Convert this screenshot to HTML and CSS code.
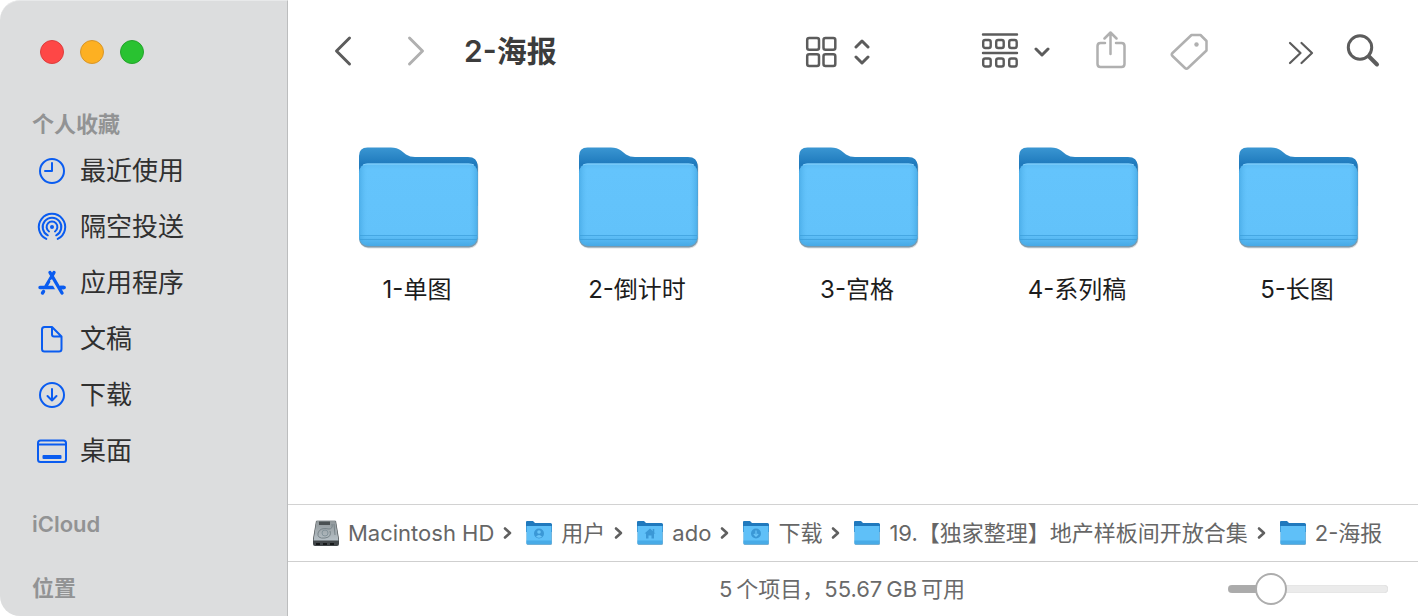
FILE: index.html
```
<!DOCTYPE html>
<html lang="zh-CN">

<head>
  <meta charset="UTF-8" />
  <meta name="viewport" content="width=device-width, initial-scale=1" />
  <title>2-海报</title>
  <link rel="stylesheet" href="styles.css">
</head>
<body>

  <!-- shared icons -->
  <svg class="defs" width="0" height="0" aria-hidden="true">
    <defs>
      <linearGradient id="folder-back" x1="0" y1="0" x2="0" y2="1">
        <stop offset="0" stop-color="#3a96d2" />
        <stop offset="0.28" stop-color="#1f7abd" />
      </linearGradient>
      <linearGradient id="folder-front" x1="0" y1="0" x2="0" y2="1">
        <stop offset="0" stop-color="#5dbcf3" />
        <stop offset="0.08" stop-color="#64c4fc" />
        <stop offset="0.86" stop-color="#62c2fa" />
        <stop offset="1" stop-color="#46a9e6" />
      </linearGradient>
      <linearGradient id="folder-sides">
        <stop offset="0" stop-color="#3b9fdc" stop-opacity="0.6" />
        <stop offset="0.07" stop-color="#58b8f0" stop-opacity="0" />
        <stop offset="0.93" stop-color="#58b8f0" stop-opacity="0" />
        <stop offset="1" stop-color="#3b9fdc" stop-opacity="0.6" />
      </linearGradient>
      <linearGradient id="disk-top" x1="0" y1="0" x2="0" y2="1">
        <stop offset="0" stop-color="#8f9699" />
        <stop offset="1" stop-color="#b6c0c6" />
      </linearGradient>
    </defs>
    <symbol id="folder" viewBox="0 0 122 104">
      <rect x="1.5" y="12" width="119" height="90.5" rx="9" fill="#000" opacity="0.12" />
      <rect x="1" y="12" width="119" height="89.5" rx="9" fill="#4f7c99" opacity="0.7" />
      <path d="M1 30V10Q1 1.500 9.500 1.500H33Q39 1.500 43 4.500L48 8.500Q52 11 57 11H110Q119.500 11 119.500 20V60H1Z" fill="url(#folder-back)" />
      <rect x="1" y="17.500" width="118.500" height="82.500" rx="9" fill="url(#folder-front)" />
      <rect x="1" y="17.500" width="118.500" height="82.500" rx="9" fill="url(#folder-sides)" />
      <path d="M5 19Q7 18 9 18H111Q114 18 116 19" fill="none" stroke="#8ad3fd" />
      <path d="M2 89.500H119M2 93.500H119" stroke="#389bd8" stroke-width="1" opacity="0.65" />
    </symbol>
    <symbol id="folder-small" viewBox="0 0 26 26">
      <rect x="0.500" y="4" width="25.500" height="21" rx="1.500" fill="#5588a8" opacity="0.7" />
      <path d="M0 2Q0 1 1 1H7L9 3H24.500Q26 3 26 4.500V12H0Z" fill="#2079bd" />
      <path d="M0.500 6H25.500V23Q25.500 24.200 24.300 24.200H1.700Q0.500 24.200 0.500 23Z" fill="#5fc0f8" />
      <path d="M0.500 20.500H25.500V23Q25.500 24.200 24.300 24.200H1.700Q0.500 24.200 0.500 23Z" fill="#48abe7" />
    </symbol>
    <symbol id="separator" viewBox="0 0 9 14">
      <path d="M2 2.500L7 7L2 11.500" fill="none" stroke="#606060" stroke-width="2.600" stroke-linecap="round" stroke-linejoin="round" />
    </symbol>
  </svg>

  <div class="window">
    <aside class="sidebar">
      <div class="lights">
        <button class="light close" aria-label="关闭"></button>
        <button class="light minimize" aria-label="最小化"></button>
        <button class="light zoom" aria-label="缩放"></button>
      </div>

      <h2>个人收藏</h2>
      <nav class="favorites">
        <a href="#recents">
          <svg class="side-icon" viewBox="0 0 32 32"><circle cx="16" cy="16" r="12" /><path d="M16 8V16H9" /></svg>
          最近使用
        </a>
        <a href="#airdrop">
          <svg class="side-icon" viewBox="0 0 32 32">
            <circle cx="16" cy="16" r="2" fill="#0a5cf0" stroke="none" />
            <path d="M13 20.500A5.400 5.400 0 1 1 19 20.500" />
            <path d="M11.800 24.300A9.300 9.300 0 1 1 20.200 24.300" />
            <path d="M10.300 27.900A13.200 13.200 0 1 1 21.700 27.900" />
          </svg>
          隔空投送
        </a>
        <a href="#apps">
          <svg class="side-icon bold" viewBox="0 0 32 32">
            <path d="M18 5.500L9.500 20M4 20.500H28M7.500 24.500L6.500 26" />
            <path d="M16.500 12L25 26.500" stroke="#dcddde" stroke-width="6" stroke-linecap="butt" />
            <path d="M14 5.500L26 26M24.500 20.500H28" />
          </svg>
          应用程序
        </a>
        <a href="#documents">
          <svg class="side-icon" viewBox="0 0 32 32">
            <path d="M8.500 4H16L25.500 13.500V26Q25.500 28.500 23 28.500H8.500Q6 28.500 6 26V6.500Q6 4 8.500 4ZM16 4V11.500Q16 13.500 18 13.500H25.500" />
          </svg>
          文稿
        </a>
        <a href="#downloads">
          <svg class="side-icon" viewBox="0 0 32 32"><circle cx="16" cy="16" r="12" /><path d="M16 10V21.500M11.500 17L16 21.500L20.500 17" /></svg>
          下载
        </a>
        <a href="#desktop">
          <svg class="side-icon" viewBox="0 0 32 32">
            <rect x="2" y="5.500" width="28" height="21.500" rx="2.500" /><path d="M2 9.500H30" />
            <rect x="6.500" y="20" width="19" height="4" rx="1" fill="#0a5cf0" stroke="none" />
          </svg>
          桌面
        </a>
      </nav>
      <h2>iCloud</h2>
      <h2>位置</h2>
    </aside>

    <main class="main">
      <header class="toolbar">
        <div class="history">
          <button aria-label="后退"><svg width="24" height="36" viewBox="0 0 24 36"><path d="M18.500 5L5.500 18L18.500 31" stroke-width="3" /></svg></button>
          <button class="dim" aria-label="前进"><svg width="24" height="36" viewBox="0 0 24 36"><path d="M6.500 5L19.500 18L6.500 31" stroke-width="3" /></svg></button>
        </div>
        <h1>2-海报</h1>

        <button class="view" aria-label="显示方式">
          <svg width="40" height="40" viewBox="0 0 40 40" stroke-width="2.500">
            <rect x="6.200" y="7" width="11.800" height="11.800" rx="2" /><rect x="22.500" y="7" width="11.800" height="11.800" rx="2" />
            <rect x="6.200" y="23.200" width="11.800" height="11.800" rx="2" /><rect x="22.500" y="23.200" width="11.800" height="11.800" rx="2" />
          </svg>
          <svg width="16" height="40" viewBox="0 0 16 40" stroke-width="3"><path d="M2 16L8 10L14 16M2 26L8 32L14 26" /></svg>
        </button>

        <div class="actions">
          <button class="group-by" aria-label="分组">
            <svg width="40" height="40" viewBox="0 0 40 40" stroke-width="2.400">
              <path d="M3 3.500H37M3 22H37" />
              <rect x="3.200" y="9" width="7.500" height="8" rx="2" /><rect x="16.200" y="9" width="7.500" height="8" rx="2" /><rect x="29.200" y="9" width="7.500" height="8" rx="2" />
              <rect x="3.200" y="27.500" width="7.500" height="8" rx="2" /><rect x="16.200" y="27.500" width="7.500" height="8" rx="2" /><rect x="29.200" y="27.500" width="7.500" height="8" rx="2" />
            </svg>
            <svg width="16" height="40" viewBox="0 0 16 40" stroke-width="3"><path d="M2 18L8 24L14 18" /></svg>
          </button>
          <button class="dim" aria-label="共享">
            <svg width="40" height="40" viewBox="0 0 40 40" stroke-width="2.500">
              <path d="M15 12H10.500Q7.500 12 7.500 15V33Q7.500 36 10.500 36H31.500Q34.500 36 34.500 33V15Q34.500 12 31.500 12H26M20.500 23V2M14.500 7.500L20.500 1.500L26.500 7.500" />
            </svg>
          </button>
          <button class="dim" aria-label="标签">
            <svg width="40" height="40" viewBox="0 0 40 40" stroke-width="2.500">
              <path d="M21.500 4H30.500L36.500 10V19.500L18 37Q16.500 38.500 15 37L2.500 25Q1 23.500 2.500 22Z" />
              <circle cx="26.500" cy="13.500" r="2.200" fill="#b0b0b0" stroke="none" />
            </svg>
          </button>
        </div>

        <div class="extras">
          <button aria-label="更多"><svg width="40" height="40" viewBox="0 0 40 40" stroke-width="2.200"><path d="M9 12L19.500 22L9 32M20.500 12L31 22L20.500 32" /></svg></button>
          <button aria-label="搜索">
            <svg width="40" height="40" viewBox="0 0 40 40"><circle cx="17" cy="16.500" r="11.700" stroke-width="3" /><path d="M26 25.500L34 33.500" stroke-width="4" /></svg>
          </button>
        </div>
      </header>

      <section class="files">
        <a class="file" href="#1"><svg class="folder"><use href="#folder" /></svg><span>1-单图</span></a>
        <a class="file" href="#2"><svg class="folder"><use href="#folder" /></svg><span>2-倒计时</span></a>
        <a class="file" href="#3"><svg class="folder"><use href="#folder" /></svg><span>3-宫格</span></a>
        <a class="file" href="#4"><svg class="folder"><use href="#folder" /></svg><span>4-系列稿</span></a>
        <a class="file" href="#5"><svg class="folder"><use href="#folder" /></svg><span>5-长图</span></a>
      </section>

      <nav class="path">
        <a href="#hd">
          <svg class="path-icon" viewBox="0 0 26 26">
            <path d="M3 1H23L26 19V24Q26 26 24 26H2Q0 26 0 24V19Z" fill="#42474a" />
            <path d="M3.500 0.500H22.500L25.500 20.500H0.500Z" fill="url(#disk-top)" />
            <rect x="6" y="1.500" width="11" height="3.500" fill="#4a5052" />
            <path d="M19 4Q20 9 16 9Q7 7 5 13Q4 19 12 18Q19 17 17 11M21 4L22 15" fill="none" stroke="#788489" stroke-width="1" />
            <circle cx="12" cy="13" r="3" fill="none" stroke="#84939a" stroke-width="1" />
            <path d="M3 24H7M10 24H14M17 24H21" stroke="#17191a" stroke-width="2" />
          </svg>
          Macintosh HD
        </a>
        <svg class="separator"><use href="#separator" /></svg>
        <a href="#users">
          <svg class="path-icon" viewBox="0 0 26 26">
            <use href="#folder-small" />
            <circle cx="13" cy="13.500" r="5" fill="#3b98d6" /><circle cx="13" cy="12" r="1.800" fill="#6ac5f8" /><path d="M10 16.500Q13 13.500 16 16.500Q13 19 10 16.500Z" fill="#6ac5f8" />
          </svg>
          用户
        </a>
        <svg class="separator"><use href="#separator" /></svg>
        <a href="#ado">
          <svg class="path-icon" viewBox="0 0 26 26">
            <use href="#folder-small" />
            <path d="M7.500 13.500L13 8.500L18.500 13.500H17V18.500H14.500V15.500H11.500V18.500H9V13.500Z" fill="#3b98d6" /><path d="M16.500 9V12" stroke="#3b98d6" stroke-width="1.500" />
          </svg>
          ado
        </a>
        <svg class="separator"><use href="#separator" /></svg>
        <a href="#downloads">
          <svg class="path-icon" viewBox="0 0 26 26">
            <use href="#folder-small" />
            <circle cx="13" cy="13.500" r="5" fill="#3b98d6" /><path d="M13 10.500V16M10.800 14L13 16.200L15.200 14" fill="none" stroke="#6ac5f8" stroke-width="1.200" />
          </svg>
          下载
        </a>
        <svg class="separator"><use href="#separator" /></svg>
        <a href="#19"><svg class="path-icon"><use href="#folder-small" /></svg>19.【独家整理】地产样板间开放合集</a>
        <svg class="separator"><use href="#separator" /></svg>
        <a href="#posters"><svg class="path-icon"><use href="#folder-small" /></svg>2-海报</a>
      </nav>

      <footer class="status">
        <p>5&thinsp;个项目，55.67&thinsp;GB&thinsp;可用</p>
        <input type="range" class="size" min="0" max="100" value="21" aria-label="图标大小">
      </footer>
    </main>
  </div>

</body>
</html>
```

FILE: styles.css
```
* {
  box-sizing: border-box;
}
body {
  margin: 0;
  background-color: #fff;
  font-family: Inter, "Noto Sans CJK SC", sans-serif;
  color: #303030;
}
h1, h2, p {
  margin: 0;
}
a {
  color: inherit;
  text-decoration: none;
}
button {
  padding: 0;
  border: none;
  background: none;
  color: inherit;
  cursor: pointer;
}
svg {
  display: block;
  flex-shrink: 0;
}
.defs {
  position: absolute;
}
.window {
  display: flex;
  min-height: 100vh;
}

/* sidebar */
.sidebar {
  width: 288px;
  flex-shrink: 0;
  padding-top: 39px;
  background-color: #dcddde;
  border-top: 1px solid #e8e9ea;
  border-right: 1px solid #bcbdbe;
  border-radius: 20px 0 0 20px;
}
.lights {
  display: flex;
  gap: 16px;
  padding-left: 40px;
  margin-bottom: 42px;
}
.light {
  width: 24px;
  height: 24px;
  border: 1px solid;
  border-radius: 50%;
}
.close {
  background-color: #fe4746;
  border-color: #dc3d3d;
}
.minimize {
  background-color: #fdb022;
  border-color: #d7962a;
}
.zoom {
  background-color: #29c231;
  border-color: #24a32b;
}
.sidebar h2 {
  padding-left: 32px;
  font-size: 22px;
  font-weight: 600;
  line-height: 37px;
  color: #929394;
}
.sidebar h2 + h2,
.favorites + h2 {
  margin-top: 27px;
}
.favorites a {
  display: flex;
  align-items: center;
  gap: 12px;
  height: 56px;
  padding-left: 36px;
  font-size: 26px;
  line-height: 32px;
}
.side-icon {
  width: 32px;
  height: 32px;
  fill: none;
  stroke: #0a5cf0;
  stroke-width: 2;
  stroke-linecap: round;
  stroke-linejoin: round;
}
.bold {
  stroke-width: 3.4;
}

/* toolbar */
.main {
  flex: 1;
  min-width: 0;
  display: flex;
  flex-direction: column;
}
.toolbar {
  display: flex;
  align-items: center;
  height: 102px;
  padding: 0 35px 0 43px;
  color: #5c5c5c;
}
.toolbar button {
  display: flex;
  align-items: center;
}
.toolbar svg {
  fill: none;
  stroke: currentColor;
  stroke-linecap: round;
  stroke-linejoin: round;
}
.toolbar .dim {
  color: #b0b0b0;
}
.history {
  display: flex;
  gap: 48px;
  margin-right: 37px;
}
.toolbar h1 {
  font-size: 30px;
  font-weight: 600;
  line-height: 36px;
  color: #3c3c3c;
  white-space: nowrap;
}
.view {
  gap: 13px;
  margin-left: auto;
  margin-right: 110px;
}
.actions {
  display: flex;
  gap: 40px;
}
.group-by {
  gap: 14px;
}
.extras {
  display: flex;
  gap: 22px;
  margin-left: 71px;
}

/* files */
.files {
  flex: 1;
  display: grid;
  grid-template-columns: repeat(auto-fill, 220px);
  align-content: start;
  padding: 44px 9px 20px 21px;
}
.file {
  display: flex;
  flex-direction: column;
  align-items: center;
  gap: 22px;
  font-size: 24px;
  line-height: 36px;
  color: #1c1c1c;
}
.file span {
  padding-right: 4px;
}
.folder {
  width: 122px;
  height: 104px;
}

/* path bar and status bar */
.path {
  display: flex;
  align-items: center;
  height: 57px;
  padding: 0 25px;
  border-top: 1px solid #d2d2d2;
  font-size: 22px;
  line-height: 28px;
  color: #666;
  white-space: nowrap;
  overflow: hidden;
}
.path a {
  display: flex;
  align-items: center;
  gap: 9px;
}
.path-icon {
  width: 26px;
  height: 26px;
}
.separator {
  width: 9px;
  height: 14px;
  margin: 0 14px 0 9px;
}
.status {
  display: flex;
  align-items: center;
  height: 55px;
  padding: 0 30px 0 168px;
  border-top: 1px solid #cfcfcf;
  font-size: 22px;
  line-height: 28px;
  color: #6a6a6a;
}
.status p {
  flex: 1;
  text-align: center;
}
.size {
  appearance: none;
  width: 160px;
  height: 32px;
  margin: 0;
  background: none;
}
.size::-webkit-slider-runnable-track {
  height: 8px;
  border-radius: 4px;
  background: linear-gradient(to right, #ababab 27%, #ebebeb 27%);
  box-shadow: inset 0 0 1px #bbb;
}
.size::-webkit-slider-thumb {
  appearance: none;
  width: 32px;
  height: 32px;
  margin-top: -12px;
  border: 2px solid #adadad;
  border-radius: 50%;
  background-color: #fff;
}
```
